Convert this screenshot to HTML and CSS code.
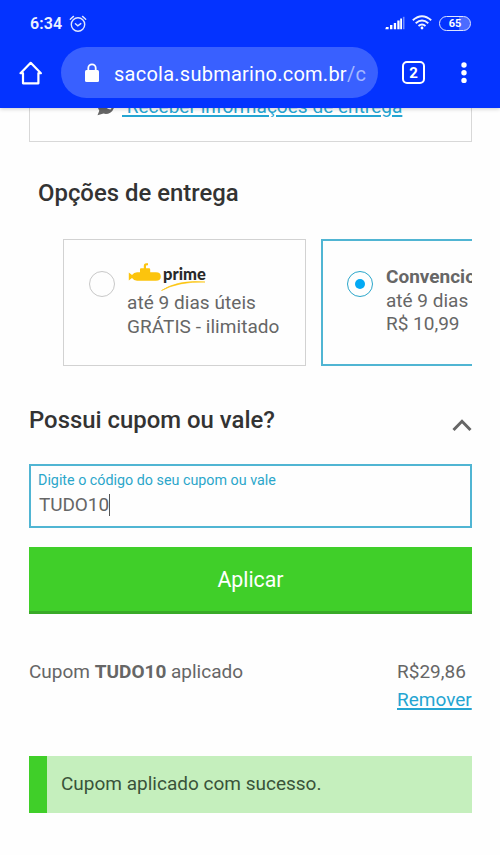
FILE: index.html
```html
<!DOCTYPE html>
<html lang="pt-BR">
<head>
<meta charset="utf-8">
<title>Sacola</title>
<link rel="stylesheet" href="styles.css">
</head>
<body>
<header class="browser">
  <div class="status">
    <span class="clock">6:34</span>
    <svg class="alarm" width="18" height="18" viewBox="0 0 18 18" fill="none" stroke="#dfe7ff" stroke-width="1.4" stroke-linecap="round"><circle cx="9" cy="9.5" r="6.7"/><path d="M1.3 4.2 4.5 1.4M16.7 4.2 13.5 1.4M6.4 8.8 8.8 10.8 11.8 8.6"/></svg>
    <svg class="signal" width="20" height="14" viewBox="0 0 20 14"><path fill="#fff" d="M1 11h2.6v2.2H.3zM5 9h2.400v4.200H5zM8.800 7h2.300v6.200H8.800zM12.300 4.600h2.300v8.600h-2.300zM15.200 2.600h1.800v10.600h-1.800z"/><path fill="#6f8bff" d="M17.900.8h1.600v12.400h-1.600z"/></svg>
    <svg class="wifi" width="20" height="15" viewBox="0 0 20 15" fill="none" stroke="#eef2ff" stroke-width="1.900"><path d="M.8 5.300Q10-2.800 19.200 5.300M3.700 8.200Q10 2.800 16.300 8.200M6.500 11Q10 8 13.500 11"/><circle cx="10" cy="13" r="1.400" fill="#fff" stroke="none"/></svg>
    <span class="battery">65</span>
  </div>
  <div class="toolbar">
    <svg class="home" width="24" height="24" viewBox="0 0 24 24" fill="none" stroke="#fff" stroke-width="2.200" stroke-linejoin="round" stroke-linecap="round"><path d="M1.500 12.200 11.700 1.800 21.900 12.200H19.400V22.300H4V12.200Z"/></svg>
    <div class="address">
      <svg class="lock" width="16" height="20" viewBox="0 0 16 20"><rect x="1" y="7" width="14" height="12" rx="1.500" fill="#fff"/><path d="M4.300 8V5a3.700 3.700 0 0 1 7.400 0v3" fill="none" stroke="#fff" stroke-width="1.800"/></svg>
      <span class="url">sacola.submarino.com.br<span class="path">/c</span></span>
    </div>
    <span class="tabs">2</span>
    <svg class="more" width="6" height="22" viewBox="0 0 6 22" fill="#fff"><circle cx="3" cy="3" r="2.700"/><circle cx="3" cy="10.700" r="2.700"/><circle cx="3" cy="18.400" r="2.700"/></svg>
  </div>
</header>
<main class="page">
  <section class="tracking">
    <svg class="whats" width="19" height="20" viewBox="0 0 19 20"><path d="M10 0a8.500 8.500 0 1 1-3.500 16.600L.5 18.200l1.800-4.500A8.800 8.800 0 0 1 10 0z" fill="#666"/><path d="M6 5q1.500 6.500 7.500 7.500l1.500-2-2.500-1.300-1.500 1Q9 9 8.500 7.500L9.500 6 8 4z" fill="#fff"/></svg>
    <a class="link">&nbsp;Receber informações de entrega</a>
  </section>
  <h2 class="title delivery-title">Opções de entrega</h2>
  <section class="options">
    <article class="option">
      <span class="radio"></span>
      <div class="details prime-details">
        <svg class="prime" width="80" height="30" viewBox="0 0 80 30"><path fill="#fcc40d" d="M.8 9.500 4 12Q6 9.200 9 9.200H12V6.200Q12 5.200 13 5.200H15.800V3Q15.800.2 18.300.2H20V2.200H18.800Q18 2.200 18 3V5.200H21Q22.200 5.200 22.200 6.500V9.200H28Q32.800 9.200 32.800 13.500T28 17.800H9Q6 17.800 4 15L.8 17.500Z"/><text class="prime-word" x="35" y="17" textLength="43" lengthAdjust="spacingAndGlyphs">prime</text><path d="M33.500 27.500Q50 16.500 77 19 51 18.300 33.500 27.500Z" fill="#fcc40d" stroke="#fcc40d" stroke-width=".6"/></svg>
        <p>até 9 dias úteis</p>
        <p>GRÁTIS - ilimitado</p>
      </div>
    </article>
    <article class="option selected">
      <span class="radio"></span>
      <div class="details">
        <p><strong>Convencional</strong></p>
        <p>até 9 dias</p>
        <p>R$ 10,99</p>
      </div>
    </article>
  </section>
  <div class="coupon-head">
    <h2 class="title">Possui cupom ou vale?</h2>
    <svg class="chevron" width="20" height="14" viewBox="0 0 20 14" fill="none" stroke="#666" stroke-width="3"><path d="M1.500 12 10 3.300 18.500 12"/></svg>
  </div>
  <div class="field">
    <label>Digite o código do seu cupom ou vale</label>
    <div class="value">TUDO10<span class="caret"></span></div>
  </div>
  <button class="apply">Aplicar</button>
  <section class="applied">
    <p>Cupom <strong>TUDO10</strong> aplicado</p>
    <div class="amount"><p>R$29,86</p><a class="link">Remover</a></div>
  </section>
  <div class="alert">Cupom aplicado com sucesso.</div>
</main>
</body>
</html>
```
FILE: styles.css
```css
* { box-sizing: border-box; }
body { margin: 0; height: 855px; overflow: hidden; background: #fefefe; color: #666; font-family: Roboto, "Liberation Sans", sans-serif; font-size: 19px; }
p, h2 { margin: 0; }
.browser { position: relative; height: 108px; background: #0433ff; color: #fff; box-shadow: 0 1px 4px rgba(0,0,0,.2); }
.status { display: flex; align-items: center; height: 47px; padding: 0 29px 0 30px; }
.clock { font-size: 16px; font-weight: 600; letter-spacing: .1px; color: #eef2ff; width: 32px; }
.alarm { margin-left: 7px; }
.signal { margin: -1px 0 0 auto; }
.wifi { margin: -2px 7px 0 7px; }
.battery { width: 32px; height: 15px; margin-top: -1px; border: 1px solid #dce4ff; border-radius: 8px; font-size: 11px; line-height: 13px; font-weight: 700; text-align: center; background: linear-gradient(90deg, transparent 65%, #4b6bff 65%); }
.toolbar { display: flex; align-items: center; height: 51px; padding-left: 19px; }
.address { display: flex; align-items: center; width: 317px; height: 51px; margin-left: 18px; padding-left: 23px; border-radius: 26px; background: #3960ff; }
.url { margin: 2px 0 0 14px; font-size: 20px; letter-spacing: .25px; white-space: nowrap; }
.path { color: #a5b8ff; }
.tabs { width: 23px; height: 23px; margin-left: 24px; border: 2px solid #fff; border-radius: 5px; font-size: 15px; line-height: 20px; font-weight: 700; text-align: center; }
.more { margin-left: 36px; }
.page { height: 747px; padding: 0 28px 0 29px; overflow: hidden; }
.tracking { display: flex; height: 45px; margin-top: -11px; padding-left: 67px; border: 1px solid #d8d8d8; border-top: 0; }
.whats { flex: none; }
.link { color: #25a5d2; text-decoration: underline; text-underline-offset: 2px; text-decoration-thickness: 1.500px; }
.tracking .link { margin-left: 6px; line-height: 20px; white-space: nowrap; letter-spacing: .03px; }
.title { font-size: 23.900px; line-height: 28px; font-weight: 500; color: #333; }
.delivery-title { margin: 37px 0 0 9px; }
.options { display: flex; gap: 15px; margin-top: 32px; padding-left: 34px; overflow: hidden; }
.option { display: flex; flex: none; width: 243px; height: 127px; border: 1px solid #d2d2d2; padding: 23px 0 0 25px; }
.option.selected { border: 2px solid #50b5d3; padding: 22px 0 0 24px; }
.radio { flex: none; display: grid; place-items: center; width: 26px; height: 26px; margin-top: 8px; border: 1px solid #c8c8c8; border-radius: 50%; }
.selected .radio { border-color: #2ba6ca; }
.selected .radio::after { content: ""; width: 10px; height: 10px; border-radius: 50%; background: #03a9f4; }
.details { margin: 2px 0 0 13px; font-size: 19px; line-height: 23.600px; white-space: nowrap; }
.prime-details { margin: 0 0 0 12px; letter-spacing: .05px; }
.prime { display: block; margin: 0 0 -2px 1px; }
.prime-word { font: 900 17px Lato, sans-serif; fill: #292929; }
.coupon-head { display: flex; justify-content: space-between; margin-top: 40px; }
.chevron { margin-top: 12px; }
.field { height: 64px; margin-top: 30px; padding: 6px 8px; border: 2px solid #50b5d3; }
.field label { display: block; margin-left: -1px; font-size: 14.300px; line-height: 16px; color: #2ba6ca; }
.value { display: flex; align-items: center; height: 25px; margin-top: 4px; letter-spacing: -.1px; }
.caret { width: 1px; height: 22px; background: #555; }
.apply { display: block; width: 100%; height: 67px; margin-top: 19px; padding: 0; border: 0; border-bottom: 3px solid #39aa28; background: #40cf29; color: #fff; font: 21.300px Roboto, sans-serif; }
.applied { display: flex; justify-content: space-between; height: 57px; margin-top: 44px; line-height: 28px; }
.amount { width: 75px; }
.alert { height: 57px; margin-top: 41px; padding-left: 14px; border-left: 18px solid #40cf29; background: #c5efbd; color: #395339; line-height: 56px; }
```
